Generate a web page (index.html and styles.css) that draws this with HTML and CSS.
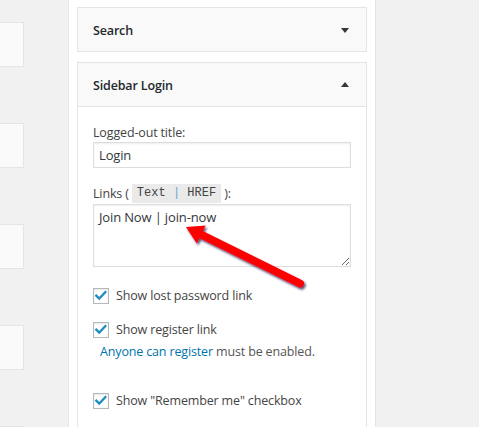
FILE: index.html
```html
<!DOCTYPE html>
<html lang="en">
<head>
<meta charset="utf-8">
<title>Widgets</title>
<link rel="stylesheet" href="styles.css">
</head>
<body>
<div class="page">
  <div class="left-col">
    <div class="stub"></div>
    <div class="stub"></div>
    <div class="stub"></div>
    <div class="stub"></div>
    <div class="stub"></div>
  </div>
  <div class="panel">
    <div class="widget">
      <div class="widget-top">
        <h3 class="widget-title">Search</h3>
        <span class="tri tri-down"></span>
      </div>
    </div>
    <div class="widget widget-open">
      <div class="widget-top">
        <h3 class="widget-title">Sidebar Login</h3>
        <span class="tri tri-up"></span>
      </div>
      <div class="widget-inside">
        <label class="field-label">Logged-out title:</label>
        <input class="text-input" type="text" value="Login">
        <label class="field-label links-label">Links ( <code class="code">Text <span class="pipe">|</span> HREF</code> ):</label>
        <textarea class="links-area">Join Now | join-now</textarea>
        <label class="check-row row-first"><span class="cb"><svg viewBox="0 0 16 16" width="14" height="14"><polyline points="2.6,7.6 6,11 13,3.6" fill="none" stroke="#1e8cbe" stroke-width="2.6" stroke-linecap="square"/></svg></span>Show lost password link</label>
        <label class="check-row row-second"><span class="cb"><svg viewBox="0 0 16 16" width="14" height="14"><polyline points="2.6,7.6 6,11 13,3.6" fill="none" stroke="#1e8cbe" stroke-width="2.6" stroke-linecap="square"/></svg></span>Show register link</label>
        <p class="note"><a class="note-link" href="#">Anyone can register</a> must be enabled.</p>
        <label class="check-row row-third"><span class="cb"><svg viewBox="0 0 16 16" width="14" height="14"><polyline points="2.6,7.6 6,11 13,3.6" fill="none" stroke="#1e8cbe" stroke-width="2.6" stroke-linecap="square"/></svg></span>Show "Remember me" checkbox</label>
      </div>
    </div>
  </div>
</div>
<svg class="annotation" width="479" height="427" viewBox="0 0 479 427">
  <defs>
    <filter id="shadow" x="-20%" y="-20%" width="140%" height="140%">
      <feDropShadow dx="1.5" dy="2" stdDeviation="1.2" flood-color="#1a1040" flood-opacity="0.75"/>
    </filter>
  </defs>
  <g filter="url(#shadow)" fill="#ff0000">
    <line x1="201" y1="234.5" x2="300" y2="283.5" stroke="#ff0000" stroke-width="8" stroke-linecap="round"/>
    <polygon points="186,227 196.8,243.5 205.6,225.5"/>
  </g>
</svg>
</body>
</html>
```

FILE: styles.css
```css
html, body {
  margin: 0;
  padding: 0;
}

body {
  background: #f1f1f1;
  font-family: "Open Sans", "Noto Sans", sans-serif;
  font-size: 12.5px;
  letter-spacing: -0.15px;
  color: #444;
  position: relative;
  width: 479px;
  height: 427px;
  overflow: hidden;
}

.page {
  display: flex;
  height: 427px;
  overflow: hidden;
}

.left-col {
  width: 24px;
  flex-shrink: 0;
  display: flex;
  flex-direction: column;
  gap: 56px;
  padding-top: 22px;
}

.stub {
  height: 45px;
  flex-shrink: 0;
  box-sizing: border-box;
  border: 1px solid #e5e5e5;
  border-left: 0;
  background: #fafafa;
}

.panel {
  margin-left: 44px;
  width: 308px;
  flex-shrink: 0;
  box-sizing: border-box;
  border-left: 1px solid #e8e8e8;
  border-right: 1px solid #e3e3e3;
  background: #fff;
  padding: 7px 8px 0;
  overflow: hidden;
}

.widget {
  border: 1px solid #e5e5e5;
  background: #f9f9f9;
  margin-bottom: 10px;
}

.widget-top {
  height: 43px;
  display: flex;
  align-items: center;
  justify-content: space-between;
  padding: 0 17px 0 15px;
}

.widget-open .widget-top {
  border-bottom: 1px solid #e5e5e5;
}

.widget-title {
  margin: 0;
  padding-top: 2px;
  font-size: 12.5px;
  font-weight: 600;
  color: #23282d;
}

.tri {
  width: 0;
  height: 0;
  border-left: 4px solid transparent;
  border-right: 4px solid transparent;
}

.tri-down {
  border-top: 5px solid #32373c;
  margin-top: 1px;
}

.tri-up {
  border-bottom: 5px solid #32373c;
  margin-top: -1px;
}

.widget-inside {
  background: #fff;
  padding: 17px 15px 20px;
}

.field-label {
  display: block;
  line-height: 18px;
  color: #444;
}

.text-input {
  display: block;
  width: 258px;
  height: 26px;
  box-sizing: border-box;
  margin: 0;
  border: 1px solid #ddd;
  box-shadow: inset 0 1px 2px rgba(0, 0, 0, 0.07);
  padding: 0 5px;
  font-family: "Open Sans", "Noto Sans", sans-serif;
  font-size: 13px;
  letter-spacing: -0.15px;
  color: #32373c;
  outline: none;
}

.links-label {
  margin-top: 16px;
  line-height: 20px;
  height: 20px;
}

.code {
  display: inline-block;
  vertical-align: top;
  background: #eaeaea;
  font-family: "Liberation Mono", "DejaVu Sans Mono", monospace;
  font-size: 12px;
  letter-spacing: 0;
  line-height: 19px;
  padding: 0 5px;
  color: #444;
}

.pipe {
  color: #6aa6d6;
}

.links-area {
  display: block;
  width: 258px;
  height: 63px;
  box-sizing: border-box;
  margin: 0;
  border: 1px solid #ddd;
  box-shadow: inset 0 1px 2px rgba(0, 0, 0, 0.07);
  padding: 3px 5px;
  font-family: "Open Sans", "Noto Sans", sans-serif;
  font-size: 13px;
  letter-spacing: -0.15px;
  line-height: 18px;
  color: #32373c;
  outline: none;
}

.check-row {
  display: flex;
  align-items: center;
  gap: 7px;
  line-height: 18px;
  color: #444;
}

.row-first {
  margin-top: 20px;
}

.row-second {
  margin-top: 16px;
}

.row-third {
  margin-top: 31px;
}

.cb {
  width: 16px;
  height: 16px;
  box-sizing: border-box;
  border: 1px solid #b4b9be;
  background: #fff;
  box-shadow: inset 0 1px 2px rgba(0, 0, 0, 0.1);
  display: flex;
  align-items: center;
  justify-content: center;
  flex-shrink: 0;
}

.note {
  margin: 4px 0 0;
  padding-left: 7px;
  line-height: 18px;
  color: #555;
}

.note-link {
  color: #0073aa;
  text-decoration: none;
}

.annotation {
  position: absolute;
  left: 0;
  top: 0;
  pointer-events: none;
}
```
